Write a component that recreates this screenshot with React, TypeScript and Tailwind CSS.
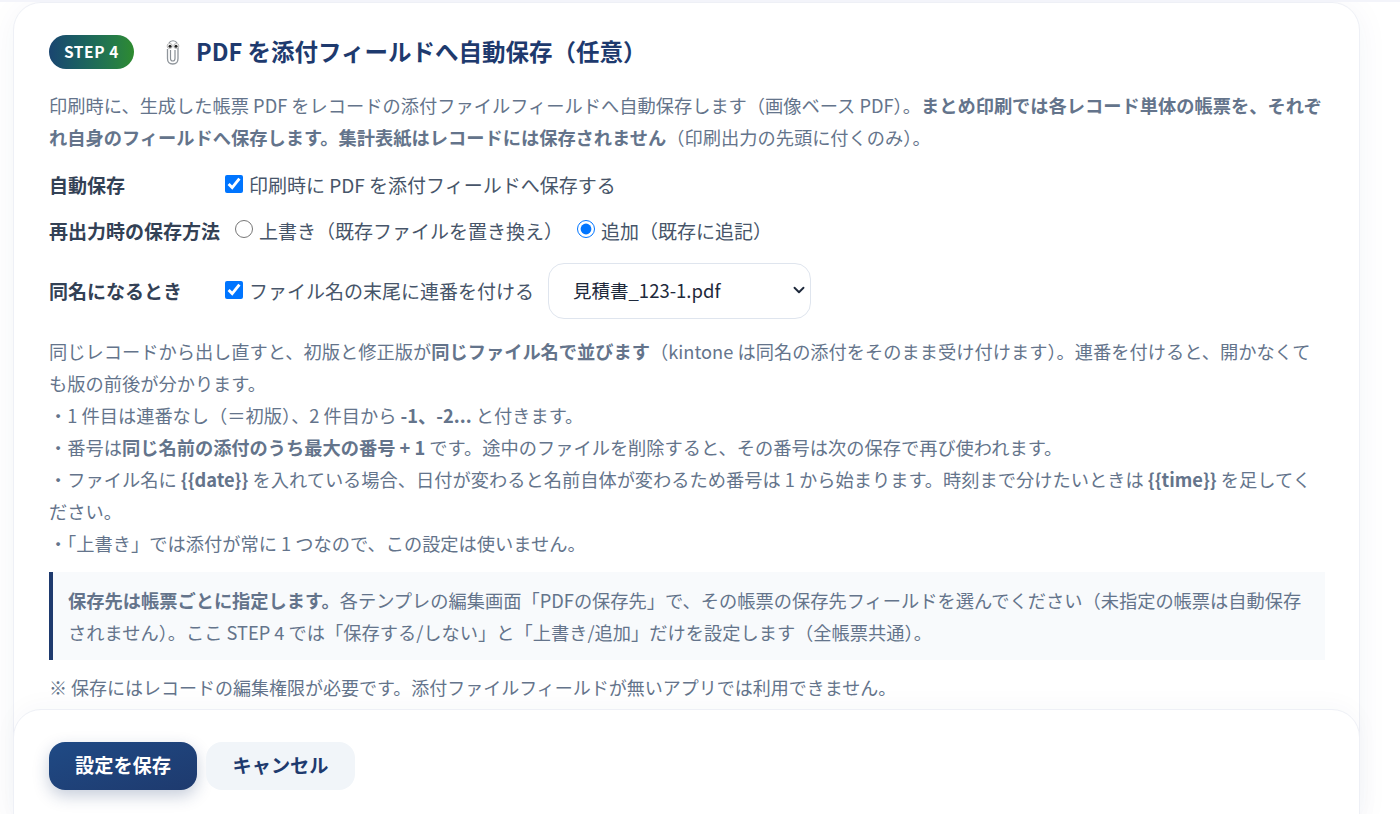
import React from "react";
import { ChevronDown } from "lucide-react";

const font = { fontFamily: '"Noto Sans CJK JP",sans-serif' };

function Clip() {
  return (
    <svg width="20" height="28" viewBox="0 0 20 28" fill="none">
      <path d="M4.500 11v9.500c0 3.500 2.300 5.500 5.300 5.500s5.200-2 5.200-5.500V10" stroke="#8f959b" strokeWidth="1.300" fill="none" />
      <path d="M7.500 12v8.500c0 1.500 1 2.500 2.300 2.500s2.200-1 2.200-2.500V12" stroke="#8a9096" strokeWidth="1.200" />
      <path d="M6 5c1.500-3 6.500-3 8 0" stroke="#8f959b" strokeWidth="1.200" />
      <circle cx="6.700" cy="8" r="2.600" fill="#fff" stroke="#777" strokeWidth=".5" />
      <circle cx="13.300" cy="8" r="2.600" fill="#fff" stroke="#777" strokeWidth=".5" />
      <circle cx="7" cy="8.200" r="1.500" fill="#222" />
      <circle cx="13" cy="8.200" r="1.500" fill="#222" />
    </svg>
  );
}

export default function App() {
  return (
    <div style={font} className="h-[814px] overflow-hidden bg-white border-t-[2px] border-[#f3f4fa] pl-[13px] pr-[40px] relative">
      <div className="h-[814px] rounded-t-[28px] bg-white border border-[#eef0f6] shadow-[0_4px_32px_rgba(30,58,110,0.05)] pl-[35px] pr-[34px] pt-[31px]">
        <div className="flex items-center h-[36px]">
          <span className="w-[85px] h-[34px] rounded-full bg-gradient-to-r from-[#1a4570] to-[#2e8b2e] text-white text-[15.500px] font-bold flex items-center justify-center tracking-[0.6px]">STEP 4</span>
          <span className="ml-[26px] w-[26px] flex justify-center"><Clip /></span>
          <h2 className="ml-[10px] text-[23.500px] font-bold text-[#1e3a6e]">PDF を添付フィールドへ自動保存（任意）</h2>
        </div>
        <p className="mt-[19px] text-[18.240px] leading-[32px] text-[#64748b]">
          印刷時に、生成した帳票 PDF をレコードの添付ファイルフィールドへ自動保存します（画像ベース PDF）。<b>まとめ印刷では各レコード単体の帳票を、それぞれ自身のフィールドへ保存します。集計表紙はレコードには保存されません</b>（印刷出力の先頭に付くのみ）。
        </p>
        <div className="mt-[16px] flex items-center h-[32px] text-[19px] text-[#475569]">
          <span className="w-[176px] font-bold text-[#334155]">自動保存</span>
          <label className="flex items-center gap-[6px]"><input type="checkbox" readOnly checked className="w-[18px] h-[18px] -mt-[3px]" />印刷時に PDF を添付フィールドへ保存する</label>
        </div>
        <div className="mt-[14px] flex items-center h-[32px] text-[19px] text-[#475569]">
          <span className="w-[186px] font-bold text-[#334155]">再出力時の保存方法</span>
          <label className="flex items-center gap-[6px]"><input type="radio" readOnly name="m" className="w-[18px] h-[18px] -mt-[4px]" />上書き（既存ファイルを置き換え）</label>
          <label className="ml-[14px] flex items-center gap-[6px]"><input type="radio" readOnly checked name="m2" className="w-[18px] h-[18px] -mt-[4px]" />追加（既存に追記）</label>
        </div>
        <div className="mt-[16px] flex items-center h-[56px] text-[19px] text-[#475569]">
          <span className="w-[176px] font-bold text-[#334155]">同名になるとき</span>
          <label className="flex items-center gap-[6px]"><input type="checkbox" readOnly checked className="w-[18px] h-[18px] -mt-[3px]" />ファイル名の末尾に連番を付ける</label>
          <span className="ml-[14px] relative flex">
            <select className="appearance-none w-[263px] h-[56px] rounded-[16px] border border-[#dfe5ee] bg-white pl-[24px] pr-[30px] text-[18.500px] text-[#1e293b]"><option>見積書_123-1.pdf</option></select>
            <ChevronDown className="absolute right-[3px] top-[18px] pointer-events-none text-[#1e293b]" size={18} strokeWidth={2.500} />
          </span>
        </div>
        <div className="mt-[16px] text-[18.240px] leading-[32px] text-[#64748b]">
          <p>同じレコードから出し直すと、初版と修正版が<b>同じファイル名で並びます</b>（kintone は同名の添付をそのまま受け付けます）。連番を付けると、開かなくても版の前後が分かります。</p>
          <p>・1 件目は連番なし（＝初版）、2 件目から <b>-1、-2...</b> と付きます。</p>
          <p>・番号は<b>同じ名前の添付のうち最大の番号 + 1</b> です。途中のファイルを削除すると、その番号は次の保存で再び使われます。</p>
          <p>・ファイル名に <b>{"{{date}}"}</b> を入れている場合、日付が変わると名前自体が変わるため番号は 1 から始まります。時刻まで分けたいときは <b>{"{{time}}"}</b> を足してください。</p>
          <p>・「上書き」では添付が常に 1 つなので、この設定は使いません。</p>
        </div>
        <div className="mt-[13px] border-l-[4px] border-[#1e3a6e] bg-[#f8fafc] pl-[15px] pr-[16px] py-[12px] text-[18.240px] leading-[32px] text-[#64748b]">
          <b>保存先は帳票ごとに指定します。</b>各テンプレの編集画面「PDFの保存先」で、その帳票の保存先フィールドを選んでください（未指定の帳票は自動保存されません）。ここ STEP 4 では「保存する/しない」と「上書き/追加」だけを設定します（全帳票共通）。
        </div>
        <p className="mt-[11px] text-[18px] leading-[32px] text-[#64748b]">※ 保存にはレコードの編集権限が必要です。添付ファイルフィールドが無いアプリでは利用できません。</p>
      </div>
      <div className="absolute left-[13px] top-[707px] w-[1347px] h-[120px] rounded-t-[28px] bg-white border border-[#eef0f6] shadow-[0_-4px_24px_rgba(30,58,110,0.03)] pl-[35px] pt-[32px] flex gap-[9px] items-start">
        <button className="w-[148px] h-[48px] pb-[2px] rounded-[16px] bg-gradient-to-br from-[#1f4a85] to-[#1e3a6e] text-white text-[19.200px] font-bold shadow-[0_6px_16px_rgba(30,58,110,0.25)]">設定を保存</button>
        <button className="w-[149px] h-[48px] pb-[2px] rounded-[16px] bg-[#f1f5f9] text-[#1e3a6e] text-[19.200px] font-bold">キャンセル</button>
      </div>
    </div>
  );
}
